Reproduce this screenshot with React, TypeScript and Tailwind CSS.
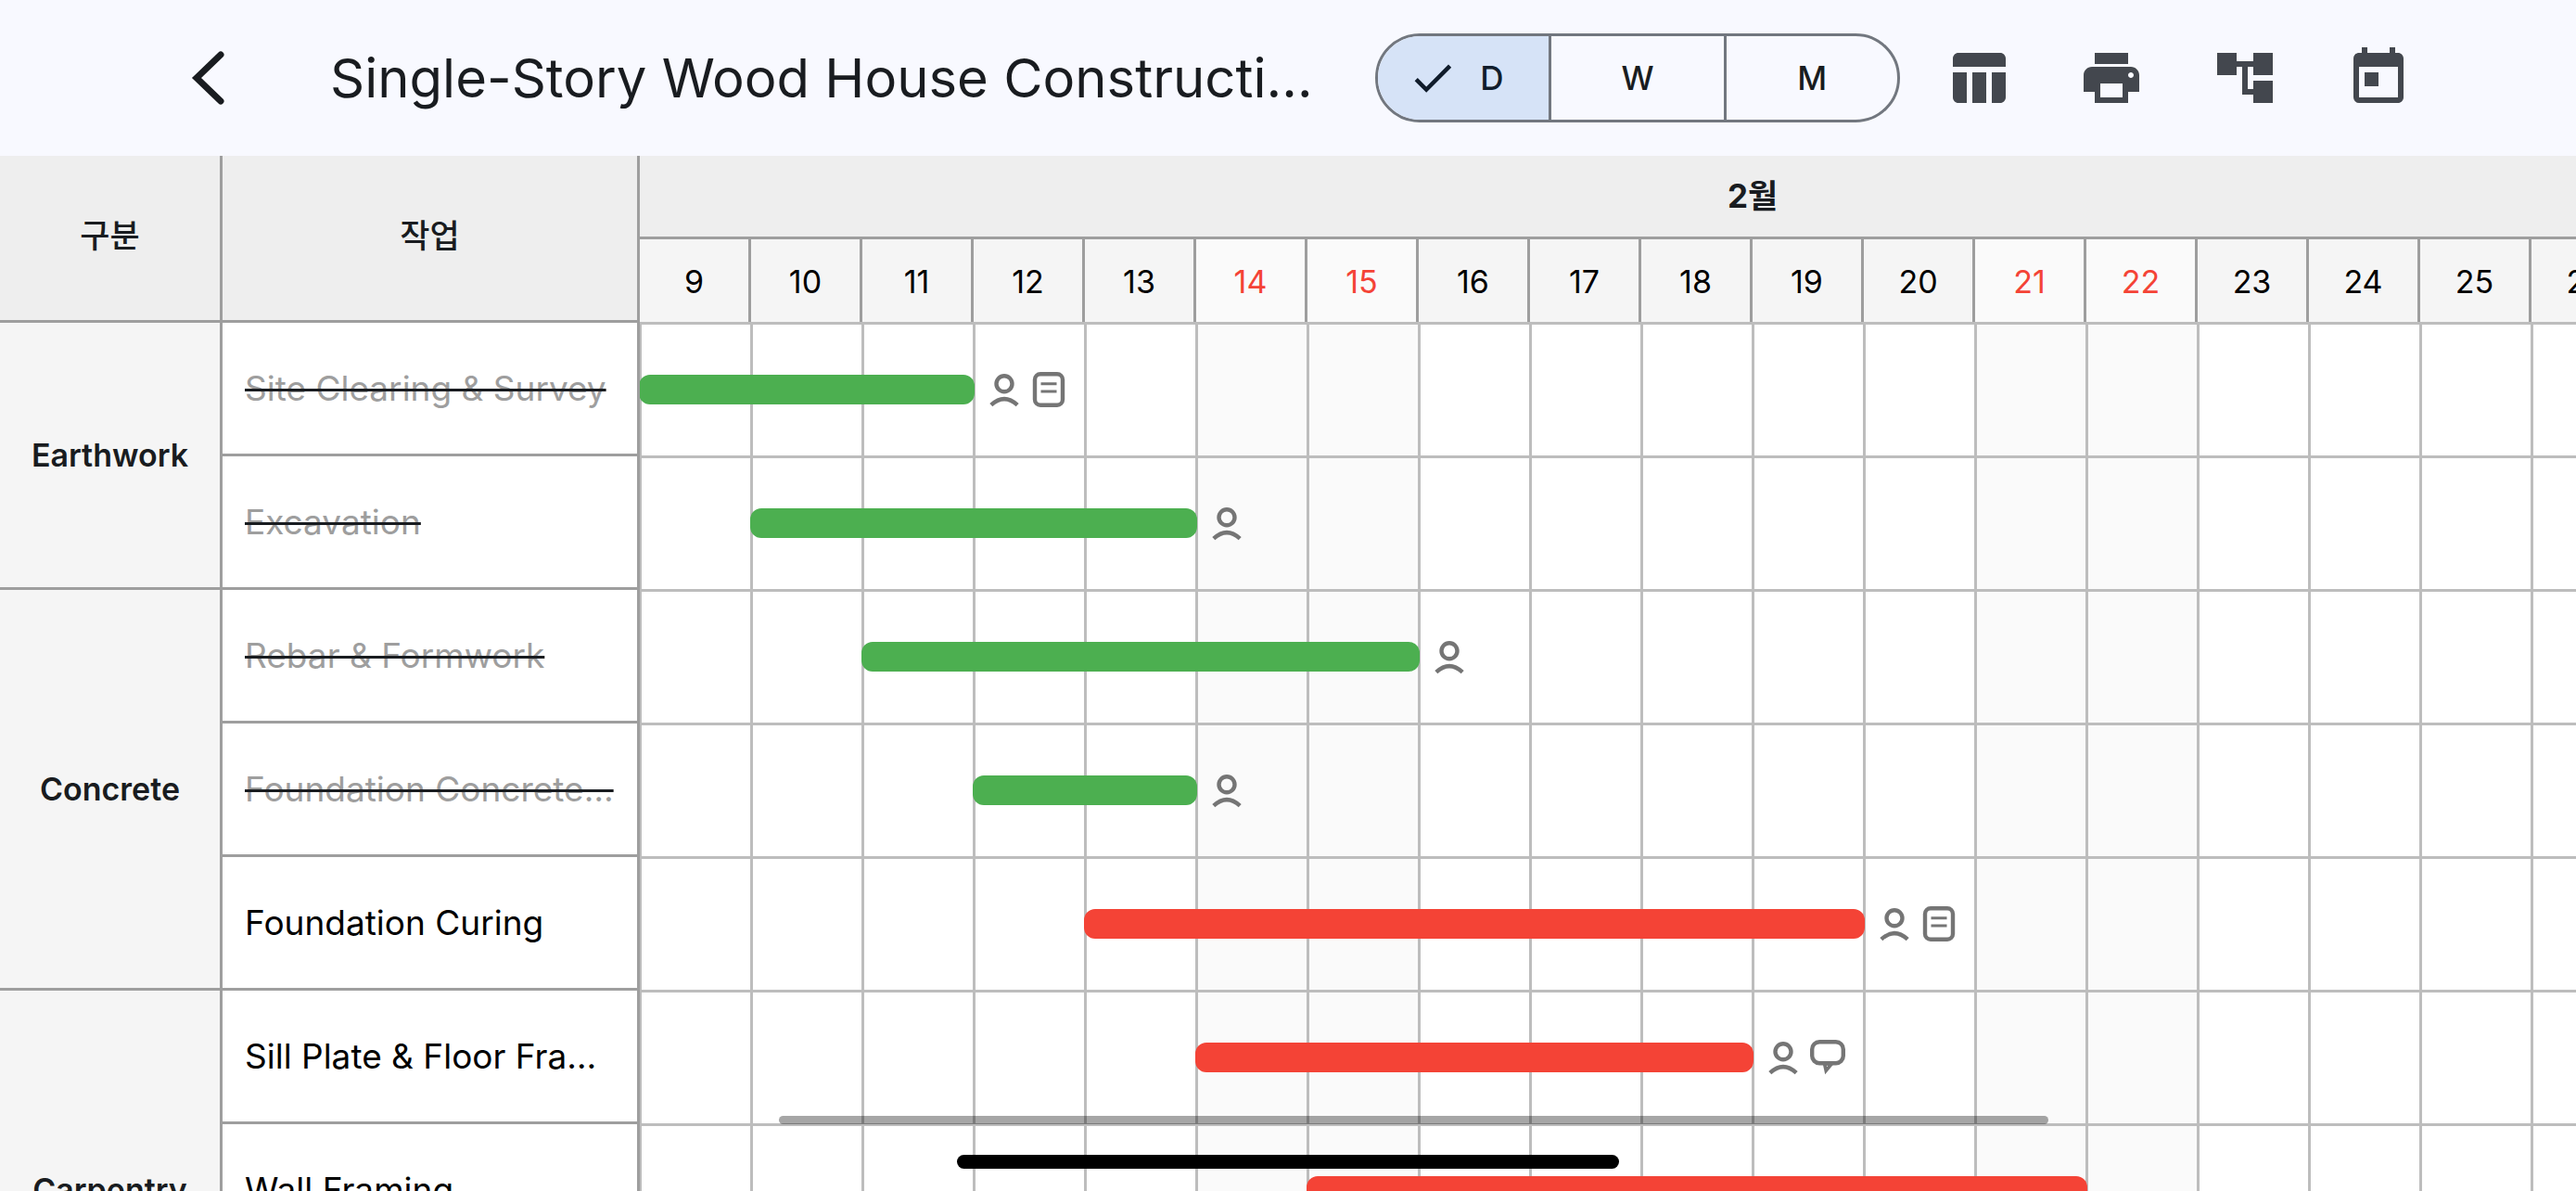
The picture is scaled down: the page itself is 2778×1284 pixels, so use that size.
import type { ReactNode } from "react";
import { MdAccountTree, MdPrint, MdTableChart, MdToday } from "react-icons/md";

type Badge = "person" | "note" | "chat";
type Task = { name: string; start: number; days: number; done?: boolean; badges: Badge[] };
type Group = { name: string; tasks: Task[]; spareRows?: number };

const FIRST_DAY = 9;
const DAY_WIDTH = 120;
const DAYS = Array.from({ length: 20 }, (_, i) => FIRST_DAY + i);
const isWeekend = (day: number) => day % 7 === 0 || day % 7 === 1;

const GROUPS: Group[] = [
  {
    name: "Earthwork",
    tasks: [
      { name: "Site Clearing & Survey", start: 9, days: 3, done: true, badges: ["person", "note"] },
      { name: "Excavation", start: 10, days: 4, done: true, badges: ["person"] },
    ],
  },
  {
    name: "Concrete",
    tasks: [
      { name: "Rebar & Formwork", start: 11, days: 5, done: true, badges: ["person"] },
      { name: "Foundation Concrete…", start: 12, days: 2, done: true, badges: ["person"] },
      { name: "Foundation Curing", start: 13, days: 7, badges: ["person", "note"] },
    ],
  },
  {
    name: "Carpentry",
    spareRows: 1,
    tasks: [
      { name: "Sill Plate & Floor Fra…", start: 14, days: 5, badges: ["person", "chat"] },
      { name: "Wall Framing", start: 15, days: 7, badges: [] },
    ],
  },
];

const TASKS = GROUPS.flatMap((group) => group.tasks);

function BadgeIcon({ kind }: { kind: Badge }) {
  return (
    <svg viewBox="0 0 40 40" className="size-10" fill="none" stroke="#757575" strokeWidth="4.4" aria-hidden="true">
      {kind === "person" && (
        <>
          <circle cx="20" cy="13.700" r="8.500" />
          <path d="M5.800 36.700Q20 23.500 34.200 36.700" />
        </>
      )}
      {kind === "note" && (
        <>
          <rect x="5" y="3.200" width="30" height="33.600" rx="6" />
          <path d="M11.500 13.800h17M11.500 22h17" strokeWidth="3" />
        </>
      )}
      {kind === "chat" && (
        <>
          <rect x="3.200" y="3.200" width="33.600" height="23" rx="8" />
          <path d="M16.600 27l1.600 7.200 6-7.200z" strokeWidth="3.600" />
        </>
      )}
    </svg>
  );
}

function IconButton({ label, children }: { label: string; children: ReactNode }) {
  return (
    <button type="button" aria-label={label} className="flex size-36 items-center justify-center text-[#43474e]">
      {children}
    </button>
  );
}

function TopBar() {
  return (
    <header className="flex h-[168px] shrink-0 items-center bg-[#f8f9ff] pr-[141px] pl-[152px]">
      <button type="button" aria-label="Back" className="flex size-36 shrink-0 items-center justify-center text-[#191c20]">
        <svg viewBox="0 0 72 72" className="size-18" fill="none" stroke="currentColor" strokeWidth="7" strokeLinecap="round" aria-hidden="true">
          <path d="M50 11 24 36 50 61" />
        </svg>
      </button>
      <h1 className="ml-[60px] min-w-0 flex-1 text-[58px] whitespace-nowrap text-[#191c20]">
        Single-Story Wood House Constructi…
      </h1>
      <div
        role="group"
        aria-label="Scale"
        className="ml-16 grid h-24 w-[566px] shrink-0 grid-cols-3 overflow-hidden rounded-full border-[3px] border-[#72777f] text-[35px] font-medium text-[#191c20]"
      >
        <button
          type="button"
          aria-pressed="true"
          className="flex items-center justify-center gap-6 border-r-[3px] border-[#72777f] bg-[#d6e3f7] pr-4 text-[#101c2b]"
        >
          <svg viewBox="0 0 54 54" className="size-[54px]" fill="currentColor" aria-hidden="true">
            <path d="M20.200 36.400 10.800 27l-3.200 3.200 12.600 12.600 27-27L44 12.600z" />
          </svg>
          D
        </button>
        <button type="button" aria-pressed="false">W</button>
        <button type="button" aria-pressed="false" className="border-l-[3px] border-[#72777f]">M</button>
      </div>
      <nav aria-label="Tools" className="ml-3 flex shrink-0">
        <IconButton label="Table"><MdTableChart className="size-18" /></IconButton>
        <IconButton label="Print"><MdPrint className="size-18" /></IconButton>
        <IconButton label="Dependencies"><MdAccountTree className="size-18" /></IconButton>
        <IconButton label="Today"><MdToday className="size-18" /></IconButton>
      </nav>
    </header>
  );
}

function TaskTable() {
  return (
    <table className="w-[690px] shrink-0 table-fixed border-separate border-spacing-0 self-start">
      <thead>
        <tr className="h-[180px] bg-[#eeeeee] text-[35px] text-[#191c20]">
          <th scope="col" className="w-60 border-r-[3px] border-b-[3px] border-[#9e9e9e] px-0 pt-0 pb-1 font-medium">구분</th>
          <th scope="col" className="border-r-[3px] border-b-[3px] border-[#9e9e9e] px-0 pt-0 pb-1 font-medium">작업</th>
        </tr>
      </thead>
      {GROUPS.map((group) => (
        <tbody key={group.name}>
          {group.tasks.map((task, i) => (
            <tr key={task.name} className="h-36">
              {i === 0 && (
                <th
                  scope="rowgroup"
                  rowSpan={group.tasks.length + (group.spareRows ?? 0)}
                  className="border-r-[3px] border-b-[3px] border-[#9e9e9e] bg-[#f5f5f5] p-0 text-[34px] font-semibold text-[#191c20]"
                >
                  {group.name}
                </th>
              )}
              <td className="border-r-[3px] border-b-[3px] border-[#9e9e9e] bg-white py-0 pr-0 pl-6 text-[37px] whitespace-nowrap">
                {task.done ? (
                  <s className="text-[#9e9e9e] decoration-[#191c20] decoration-[3px]">{task.name}</s>
                ) : (
                  task.name
                )}
              </td>
            </tr>
          ))}
          {Array.from({ length: group.spareRows ?? 0 }, (_, i) => (
            <tr key={i} className="h-36">
              <td className="border-r-[3px] border-b-[3px] border-[#9e9e9e] bg-white" />
            </tr>
          ))}
        </tbody>
      ))}
    </table>
  );
}

function Timeline() {
  return (
    <section aria-label="Timeline" className="min-w-0 flex-1 overflow-hidden">
      <div className="w-[2400px]">
        <div className="flex h-[90px] items-center justify-center border-b-[3px] border-[#9e9e9e] bg-[#eeeeee] text-[35px] font-bold text-[#191c20]">
          2월
        </div>
        <div className="flex h-[90px]">
          {DAYS.map((day) => (
            <div
              key={day}
              className={
                isWeekend(day)
                  ? "flex w-30 items-center justify-center border-r-[3px] border-[#9e9e9e] bg-[#fafafa] text-[34px] text-[#f44336]"
                  : "flex w-30 items-center justify-center border-r-[3px] border-[#9e9e9e] bg-[#f5f5f5] text-[34px] text-black"
              }
            >
              {day}
            </div>
          ))}
        </div>
        <div className="-mt-px -ml-px bg-white">
          {TASKS.map((task) => (
            <div key={task.name} className="grid h-36 grid-cols-[repeat(20,120px)]">
              {DAYS.map((day, i) => (
                <div
                  key={day}
                  style={{ gridColumn: i + 1, gridRow: 1 }}
                  className={
                    isWeekend(day)
                      ? "border-t-[3px] border-l-[3px] border-[#bdbdbd] bg-[#fafafa]"
                      : "border-t-[3px] border-l-[3px] border-[#bdbdbd]"
                  }
                />
              ))}
              <div
                style={{ gridColumn: `${task.start - FIRST_DAY + 1} / -1`, gridRow: 1 }}
                className="z-10 flex items-center pt-0.5"
              >
                <div
                  style={{ width: task.days * DAY_WIDTH + 2 }}
                  className={task.done ? "h-8 rounded-xl bg-[#4caf50]" : "h-8 rounded-xl bg-[#f44336]"}
                />
                <div className="ml-3 flex gap-2">
                  {task.badges.map((badge) => (
                    <BadgeIcon key={badge} kind={badge} />
                  ))}
                </div>
              </div>
            </div>
          ))}
        </div>
      </div>
    </section>
  );
}

export default function App() {
  return (
    <div className="relative flex h-screen flex-col overflow-hidden bg-white font-['Inter','Noto_Sans_CJK_KR',sans-serif]">
      <TopBar />
      <main className="flex min-h-0 flex-1 overflow-hidden">
        <TaskTable />
        <Timeline />
      </main>
      <div className="absolute bottom-18 left-[840px] z-20 h-[9px] w-[1369px] rounded-full bg-black/35" />
      <div className="absolute bottom-6 left-[1032px] z-20 h-[15px] w-[714px] rounded-full bg-black" />
    </div>
  );
}
